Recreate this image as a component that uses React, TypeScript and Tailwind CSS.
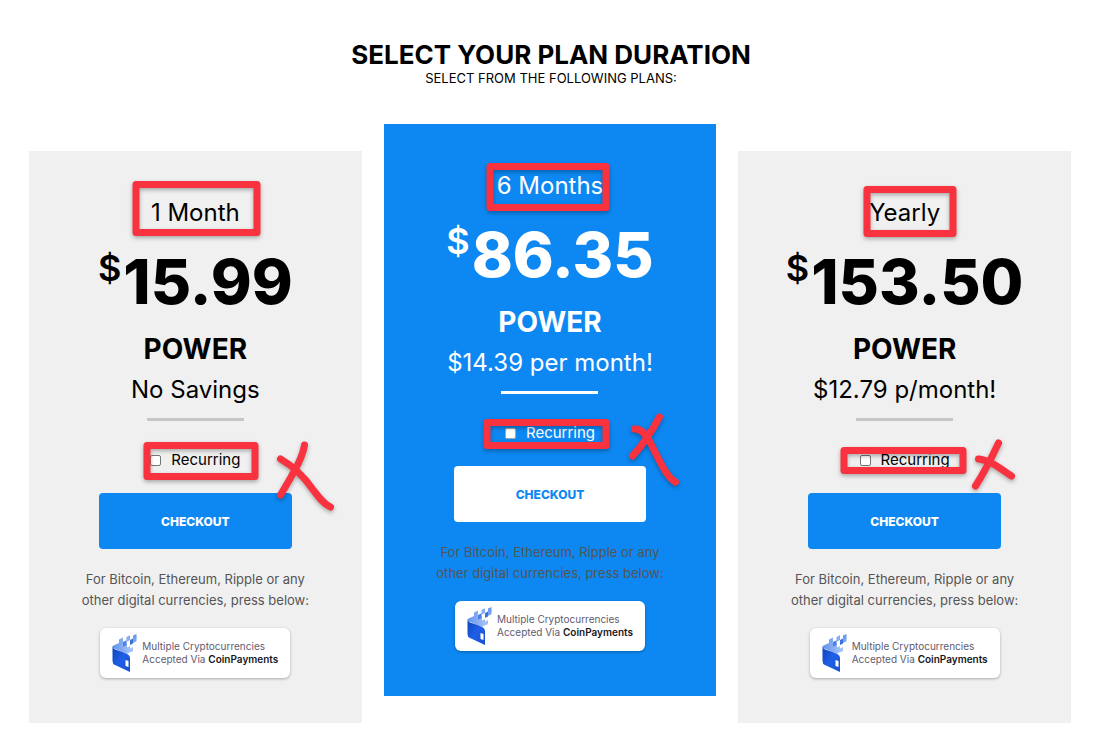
import React from "react";

type Mark = { x: number; y: number; w: number; h: number };

type Plan = {
  id: string;
  name: string;
  price: string;
  savings: string;
  featured?: boolean;
  marks: Mark[];
  strokes: string[];
};

const plans: Plan[] = [
  {
    id: "month",
    name: "1 Month",
    price: "15.99",
    savings: "No Savings",
    marks: [
      { x: 104, y: 30, w: 128, h: 55 },
      { x: 115, y: 291, w: 115, h: 38 },
    ],
    strokes: [
      "M276 294C274 308 267 317 262 327L252 344",
      "M252 308C266 316 275 325 284 338C290 346 295 353 302 356",
    ],
  },
  {
    id: "half-year",
    name: "6 Months",
    price: "86.35",
    savings: "$14.39 per month!",
    featured: true,
    marks: [
      { x: 103, y: 39, w: 123, h: 48 },
      { x: 100, y: 295, w: 126, h: 30 },
    ],
    strokes: [
      "M276 293C269 306 262 318 249 332",
      "M251 305C259 304 264 313 268 321C277 339 284 354 292 358",
    ],
  },
  {
    id: "year",
    name: "Yearly",
    price: "153.50",
    savings: "$12.79 p/month!",
    marks: [
      { x: 125, y: 35, w: 93, h: 51 },
      { x: 102, y: 296, w: 126, h: 27 },
    ],
    strokes: ["M260 292C253 307 246 321 237 335", "M240 308C252 309 262 318 273 325"],
  },
];

function Annotations({ marks, strokes }: Pick<Plan, "marks" | "strokes">) {
  return (
    <svg
      aria-hidden="true"
      width="333"
      height="572"
      viewBox="0 0 333 572"
      fill="none"
      stroke="#f9323f"
      strokeWidth="7"
      className="pointer-events-none absolute top-0 left-1/2 -translate-x-1/2 overflow-visible drop-shadow-[0_2px_2px_rgba(0,0,0,0.3)]"
    >
      {marks.map((m) => (
        <rect key={m.y} x={m.x + 3.5} y={m.y + 3.5} width={m.w - 7} height={m.h - 7} strokeLinejoin="round" />
      ))}
      {strokes.map((d) => (
        <path key={d} d={d} strokeLinecap="round" strokeLinejoin="round" />
      ))}
    </svg>
  );
}

function WalletLogo() {
  return (
    <svg aria-hidden="true" width="25" height="38" viewBox="0 0 25 38" className="shrink-0">
      <defs>
        <linearGradient id="wallet-face" x1="0" y1="0" x2="1" y2="1">
          <stop offset="0" stopColor="#0d45b8" />
          <stop offset="0.5" stopColor="#1f5fe6" />
          <stop offset="1" stopColor="#1750cf" />
        </linearGradient>
        <linearGradient id="wallet-flap" x1="0" y1="0" x2="1" y2="0">
          <stop offset="0" stopColor="#5f92ec" />
          <stop offset="1" stopColor="#a3c1f7" />
        </linearGradient>
      </defs>
      <path d="M0.500 12L7 9V5.500L11 3.500V11L15 9V13.500L18 12V18L15 20L1 14Z" fill="url(#wallet-flap)" />
      <path d="M14.500 3L18 1.200V6L14.500 7.800Z" fill="#86acf2" />
      <path d="M21 1.500L24.500 0V4.500L21 6.200Z" fill="#6d99ee" />
      <path d="M18 6L21 4.500V9.500L18 11Z" fill="#3c72de" />
      <path d="M11 8L14.500 6.200V11L11 12.800Z" fill="#4c80e4" />
      <path d="M21 9L24.500 7.200V3L21 4.800Z" fill="#7ba4f0" />
      <path d="M18 14.500L21 13V17L18 18.500Z" fill="#a3c1f7" />
      <path d="M0.500 12.500C2 17 7 15.500 16 20.500Q18 21.500 18 24V38L3 31Q0.500 30 0.500 27Z" fill="url(#wallet-face)" />
      <path d="M13.500 26L16.500 27V33L13.500 32Z" fill="#fff" />
    </svg>
  );
}

function PlanCard({ plan }: { plan: Plan }) {
  const f = plan.featured;
  return (
    <section
      aria-labelledby={plan.id + "-name"}
      className={
        "relative flex flex-col items-center pt-11 pb-[45px] text-center " +
        (f ? "bg-[#0d88f2] text-white" : "mt-[27px] bg-[#f0f0f0] text-black")
      }
    >
      <h2 id={plan.id + "-name"} className="text-2xl leading-9">
        {plan.name}
      </h2>
      <p className="mt-2.5 flex h-20 items-start justify-center gap-0.5">
        <span className="text-4xl leading-[54px] font-semibold">$</span>
        <span className="text-[62px] leading-[82px] font-extrabold">{plan.price}</span>
      </p>
      <h3 className="mt-[7px] text-[28px] leading-[42px] font-bold">POWER</h3>
      <p className="mt-0.5 text-2xl leading-9">{plan.savings}</p>
      <div className={"mt-2.5 h-[3px] w-[97px] " + (f ? "bg-white" : "bg-[#c6c6c6]")} />
      <label className="mt-[29px] flex h-5 items-center gap-2.5 text-[15px] leading-5">
        <input
          type="checkbox"
          className={
            "size-[11px] appearance-none rounded-[2px] border bg-white checked:bg-[#0d88f2] " +
            (f ? "border-[#a5a5a5]" : "border-[#767676]")
          }
        />
        Recurring
      </label>
      <button
        type="button"
        className={
          "mt-[23px] h-14 w-[58%] rounded pt-0.5 text-xs font-extrabold " +
          (f ? "bg-white text-[#0d88f2]" : "bg-[#0d88f2] text-white")
        }
      >
        CHECKOUT
      </button>
      <p className="mt-5 text-[13px] leading-[21px] text-[#555]">
        For Bitcoin, Ethereum, Ripple or any
        <br />
        other digital currencies, press below:
      </p>
      <a
        href="#coinpayments"
        className="mt-[17px] flex h-[50px] w-[190px] items-center gap-[5px] rounded-md bg-white pl-3 text-left text-[10px] leading-[13px] whitespace-nowrap text-[#5f5b70] shadow-[0_1px_3px_rgba(0,0,0,0.3)]"
      >
        <WalletLogo />
        <span>
          Multiple Cryptocurrencies
          <br />
          Accepted Via <strong className="font-semibold text-[#17171c]">CoinPayments</strong>
        </span>
      </a>
      <Annotations marks={plan.marks} strokes={plan.strokes} />
    </section>
  );
}

export default function App() {
  return (
    <main className="min-h-screen bg-white pt-10 pb-2.5 font-['Inter',sans-serif] text-black">
      <header className="text-center">
        <h1 className="text-[26px] leading-[30px] font-bold">SELECT YOUR PLAN DURATION</h1>
        <p className="text-[13px] leading-4">SELECT FROM THE FOLLOWING PLANS:</p>
      </header>
      <div className="mt-[38px] grid grid-cols-3 items-start gap-[22px] pr-[31px] pl-[29px]">
        {plans.map((plan) => (
          <PlanCard key={plan.id} plan={plan} />
        ))}
      </div>
    </main>
  );
}
